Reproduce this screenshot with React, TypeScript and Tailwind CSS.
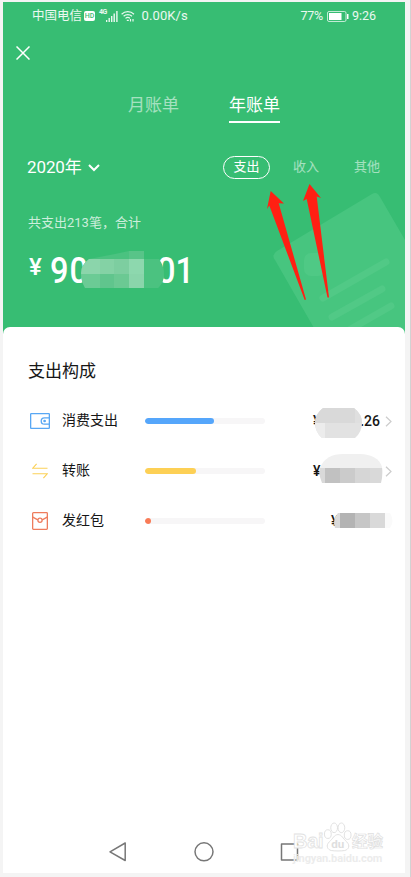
import type { ReactNode } from 'react';

type Category = {
  name: string;
  icon: ReactNode;
  percent: number;
  color: string;
  amount: ReactNode;
  hasDetail: boolean;
};

function WalletIcon() {
  return (
    <svg width="20" height="16" viewBox="0 0 20 16" fill="none" stroke="#58a7f4" strokeWidth="1.3">
      <rect x=".65" y=".65" width="18.7" height="14.7" rx=".6" />
      <path d="M19 4.8h-4.6a3.2 3.2 0 0 0 0 6.4H19" />
      <circle cx="14.6" cy="8" r=".7" fill="#58a7f4" />
    </svg>
  );
}

function TransferIcon() {
  return (
    <svg width="16" height="16" viewBox="0 0 16 16" fill="none" stroke="#fbd158" strokeWidth="1.1">
      <path d="M15.5 5.2H.8L4.6.8M.5 10.8h14.7l-3.8 4.4" />
    </svg>
  );
}

function RedPacketIcon() {
  return (
    <svg width="16" height="18" viewBox="0 0 16 18" fill="none" stroke="#ee7c5d" strokeWidth="1.3">
      <rect x=".65" y=".65" width="14.7" height="16.7" rx=".8" />
      <path d="M.8 5.2l5 2.6M15.2 5.2l-5 2.6" />
      <circle cx="8" cy="8.2" r="2.1" />
    </svg>
  );
}

function SpendMask() {
  return (
    <svg className="absolute left-[2px] top-[-13px]" width="48" height="30" viewBox="0 0 48 30">
      <clipPath id="spend">
        <path d="M8 0h31q8 6 8 15t-7 15H7q-7-6-7-15T8 0z" />
      </clipPath>
      <g clipPath="url(#spend)">
        <path fill="#e2e2e2" d="M0 0h48v30H0z" />
        <path fill="#d9d9d9" d="M0 0h40v15H0z" />
        <path fill="#dfdfdf" d="M40 0h8v15h-8z" />
        <path fill="#ececec" d="M0 15h10v15H0z" />
      </g>
    </svg>
  );
}

function TransferMask() {
  return (
    <svg className="absolute left-[6px] top-[-17px]" width="64" height="29" viewBox="0 0 64 29">
      <clipPath id="transfer">
        <path d="M1 14C5 4 13 0 24 0h17c11 0 20 5 22 13q1 9-1 16H3Q-1 20 1 14z" />
      </clipPath>
      <g clipPath="url(#transfer)">
        <path fill="#f0f0f0" d="M0 0h64v14H0z" />
        <path fill="#d9d9d9" d="M0 14h64v15H0z" />
        <path fill="#c1c1c1" d="M6 14h15v15H6z" />
        <path fill="#cbcbcb" d="M21 14h15v15H21z" />
        <path fill="#d6d6d6" d="M36 14h15v15H36z" />
      </g>
    </svg>
  );
}

function PacketMask() {
  return (
    <svg className="absolute left-[3px] top-[-8px]" width="59" height="15" viewBox="0 0 59 15">
      <path fill="#dadada" d="M4 0h3v15H1Q-2 7 4 0z" />
      <path fill="#b3b3b3" d="M6 0h15v15H6z" />
      <path fill="#c6c6c6" d="M21 0h15v15H21z" />
      <path fill="#d9d9d9" d="M36 0h15v15H36z" />
      <path fill="#fafafa" d="M51 0h5q5 8 0 15h-5z" />
    </svg>
  );
}

const categories: Category[] = [
  {
    name: '消费支出',
    icon: <WalletIcon />,
    percent: 57.5,
    color: 'bg-[#55a6fb]',
    hasDetail: true,
    amount: (
      <div className="relative ml-[48px] flex h-0 w-[67px] items-center justify-between">
        <span>¥</span>
        <span>.26</span>
        <SpendMask />
      </div>
    ),
  },
  {
    name: '转账',
    icon: <TransferIcon />,
    percent: 42.5,
    color: 'bg-[#fdd055]',
    hasDetail: true,
    amount: (
      <div className="relative ml-[48px] flex h-0 w-[67px] items-center">
        <span>¥</span>
        <TransferMask />
      </div>
    ),
  },
  {
    name: '发红包',
    icon: <RedPacketIcon />,
    percent: 5.4,
    color: 'bg-[#f97b56]',
    hasDetail: false,
    amount: (
      <div className="relative ml-[66px] flex h-0 w-[50px] items-center">
        <span>¥</span>
        <PacketMask />
      </div>
    ),
  },
];

function StatusBar() {
  return (
    <div className="flex h-7 items-center pl-[29px] pr-[29px] text-[12.5px] text-white/90">
      <span className="w-[52px] whitespace-nowrap">中国电信</span>
      <span className="mr-1 flex h-[10px] w-[11px] items-center justify-center rounded-[2px] bg-white text-[7px] font-medium text-[#37bd73]">
        HD
      </span>
      <span className="-mt-2 text-[7px] leading-none font-bold tracking-[-0.6px]">4G</span>
      <svg className="-ml-px" width="12" height="11" viewBox="0 0 12 11" fill="#fff" fillOpacity=".9">
        <path d="M0 9h1.3v2H0zM2.5 7h1.4v4H2.5zM5 5h1.4v6H5zM7.5 2.5h1.4V11H7.5zM10.2 0h1.4v11h-1.4z" />
      </svg>
      <svg className="ml-[3px]" width="14" height="12" viewBox="0 0 14 12" fill="none" stroke="#fff" strokeOpacity=".9" strokeWidth="1.2">
        <path d="M.6 4.2a9 9 0 0 1 12.4 0M2.6 6.3a6.2 6.2 0 0 1 8.4 0M4.5 8.4a3.5 3.5 0 0 1 4.6 0" />
        <path d="M5.8 10.4h2M9.5 9v2.6M12 9v2.6" />
      </svg>
      <span className="ml-[7px] text-[13px] tracking-[0.1px]">0.00K/s</span>
      <span className="ml-auto text-[12.5px] tracking-[-0.3px]">77%</span>
      <svg className="ml-1" width="22" height="11" viewBox="0 0 22 11">
        <rect x=".5" y=".5" width="18.5" height="10" rx="1.5" fill="none" stroke="#fff" strokeOpacity=".7" />
        <path d="M2 2h12.5v7H2zM20 3h1.5v5H20z" fill="#fff" />
      </svg>
      <span className="ml-[3px] text-[12.5px]">9:26</span>
    </div>
  );
}

function ReceiptArt() {
  return (
    <svg className="absolute right-0 bottom-0" width="136" height="144" viewBox="0 0 136 144">
      <path fill="#47c57f" d="M6 69Q2 64 8 60L103 3q5-3 8 3l25 43v95H49z" />
      <g stroke="#51c986" strokeLinecap="round" strokeWidth="7">
        <path d="M54 107l63-36M63 126l50-28M80 139l42-24" />
      </g>
      <rect x="35" y="62" width="21" height="23" rx="7" fill="#4fc985" />
    </svg>
  );
}

function AmountMask() {
  return (
    <svg className="absolute left-[51px] top-[-1px]" width="84" height="37" viewBox="0 0 84 37">
      <clipPath id="total">
        <path d="M8 8L34 3 48 0h15v8h15q5 7 5 15t-6 14H4q-4-7-4-15T8 8z" />
      </clipPath>
      <g clipPath="url(#total)">
        <path fill="#4bc280" d="M0 0h84v38H0z" />
        <path fill="#8bd5ab" d="M0 8h34v15H0z" />
        <path fill="#84d2a5" d="M19 8h14v15H19z" />
        <path fill="#7dcea0" d="M33 8h15v15H33z" />
        <path fill="#8dd8ae" d="M48 8h15v15H48z" />
        <path fill="#58c488" d="M48 0h15v8H48z" />
        <path fill="#6bcb95" d="M0 23h19v15H0z" />
        <path fill="#60c58d" d="M19 23h14v15H19z" />
        <path fill="#6bc993" d="M33 23h15v15H33z" />
        <path fill="#8ad5ab" d="M48 23h15v15H48z" />
        <path fill="#4bc280" d="M63 23h21v15H63z" />
      </g>
    </svg>
  );
}

function Header() {
  return (
    <header className="relative h-[333px] shrink-0 bg-[#37bd73] text-white">
      <ReceiptArt />
      <div className="relative">
        <StatusBar />
        <div className="flex h-[46px] items-center pl-[13px]">
          <svg width="14" height="14" viewBox="0 0 14 14" stroke="#fff" strokeWidth="1.5">
            <path d="M.5.5l13 13M13.5.5l-13 13" />
          </svg>
        </div>
        <nav className="flex h-[46px] gap-[50px] pl-[125px] pt-4 text-[17px] leading-[26px]">
          <span className="h-[31px] w-[51px] text-white/55">月账单</span>
          <span className="h-[31px] w-[51px] border-b-2 border-white">年账单</span>
        </nav>
        <div className="mt-[31px] flex h-[28px] items-center pl-[24px] text-[13px]">
          <span className="pt-px text-[17px] tracking-[-0.1px]">2020年</span>
          <svg className="ml-[6px] mt-px" width="12" height="8" viewBox="0 0 12 8" fill="none" stroke="#fff" strokeWidth="2">
            <path d="M1 1l5 5 5-5" />
          </svg>
          <div className="ml-auto flex items-center pr-[25px]">
            <span className="flex h-[23px] w-[47px] items-center justify-center rounded-full border border-white">
              支出
            </span>
            <span className="ml-[23px] text-white/55">收入</span>
            <span className="ml-[35px] text-white/55">其他</span>
          </div>
        </div>
        <p className="mt-[32px] pl-[25px] text-[13px] leading-5 text-white/75">共支出213笔，合计</p>
        <div className="relative ml-[27px] mt-[19px] flex h-[36px] w-[162px] items-center font-medium">
          <span className="mt-[-6px] ml-[-1px] w-[21px] text-[24px] leading-none">¥</span>
          <span className="w-[40px] origin-left scale-x-[.88] text-[37px] leading-none tracking-[1px]">90</span>
          <span className="ml-auto w-[35px] origin-left scale-x-[.88] text-[37px] leading-none">01</span>
          <AmountMask />
        </div>
      </div>
    </header>
  );
}

function CategoryRow({ category }: { category: Category }) {
  return (
    <li className="flex h-[50px] items-center pl-[27px]">
      <div className="flex w-5 justify-center">{category.icon}</div>
      <span className="ml-[12px] w-[83px] pb-px text-[14px]">{category.name}</span>
      <div className="h-[6px] w-[120px] overflow-hidden rounded-full bg-[#f7f6f7]">
        <div className={`h-full rounded-full ${category.color}`} style={{ width: `${category.percent}%` }} />
      </div>
      <div className="text-[14px] font-medium">{category.amount}</div>
      {category.hasDetail && (
        <svg className="ml-[5px]" width="7" height="11" viewBox="0 0 7 11" fill="none" stroke="#ccc" strokeWidth="1.2">
          <path d="M1 .7l5 4.8-5 4.8" />
        </svg>
      )}
    </li>
  );
}

function NavigationBar() {
  return (
    <div className="mt-auto flex h-[43px] items-center pl-[106px]">
      <svg width="190" height="20" viewBox="0 0 190 20" fill="none" stroke="#777" strokeWidth="1.5" strokeLinejoin="round">
        <path d="M16.2 1v17.5L1 9.8z" />
        <circle cx="95" cy="9.8" r="9" />
        <path d="M172.5 2h16v16h-16z" />
      </svg>
    </div>
  );
}

function Arrows() {
  return (
    <svg className="absolute left-[260px] top-[180px]" width="80" height="124" viewBox="0 0 80 124" fill="#ff2013">
      <path d="M7.7 9L21 21.500l-5.300-.300L43 117.500l-1.300.500L6.300 23.500 4 27z" />
      <path d="M46.500 2L58 16l-4.300-1.500L66 115.500h-1.500L43.700 17 40 19z" />
    </svg>
  );
}

function Watermark() {
  return (
    <div className="absolute right-[21px] bottom-[7px] w-[91px] text-white">
      <div className="flex h-[30px] items-end font-bold leading-none">
        <span className="w-[31px] font-['Liberation_Sans',sans-serif] text-[20px] leading-[22px] tracking-[-0.3px] [-webkit-text-stroke:.8px_#e2e2e2]">Bai</span>
        <svg width="28" height="30" viewBox="0 0 29 30" fill="#fff" stroke="#e0e0e0">
          <ellipse cx="4" cy="12" rx="3.5" ry="4.5" />
          <ellipse cx="10.5" cy="5.5" rx="3.5" ry="5" />
          <ellipse cx="18" cy="5.5" rx="3.5" ry="5" />
          <ellipse cx="24.5" cy="13" rx="3.5" ry="4.5" />
          <path d="M14.5 12.500c4 0 5 4 9 7.500 4 4 2 8-2 9-3 .6-11 .6-14 0-4-1-6-5-2-9 4-3.500 5-7.500 9-7.500z" />
          <text x="7.500" y="26" fontSize="12" fill="#dedede" stroke="none">du</text>
        </svg>
        <span className="w-[32px] text-[15.5px] leading-[20px] whitespace-nowrap [-webkit-text-stroke:.7px_#e0e0e0]">经验</span>
      </div>
      <div className="text-[11px] leading-[14px] font-bold tracking-[-0.1px] whitespace-nowrap text-[#ececec]">jingyan.baidu.com</div>
    </div>
  );
}

export default function App() {
  return (
    <div className="h-[877px] w-[411px] overflow-hidden border-r border-[#d2d2d2] bg-[#f4f4f4] pl-[3px] pt-[2px] font-[Roboto,'Noto_Sans_CJK_SC',sans-serif]">
      <div className="relative flex h-[871px] w-[402px] flex-col bg-white text-[#161616]">
        <Header />
        <main className="relative -mt-2 flex flex-1 flex-col rounded-t-[7px] bg-white">
          <h1 className="pl-[25px] pt-[31px] text-[17px] leading-[26px]">支出构成</h1>
          <ul className="mt-[12px]">
            {categories.map((category) => (
              <CategoryRow key={category.name} category={category} />
            ))}
          </ul>
          <NavigationBar />
        </main>
        <Arrows />
        <Watermark />
      </div>
    </div>
  );
}
